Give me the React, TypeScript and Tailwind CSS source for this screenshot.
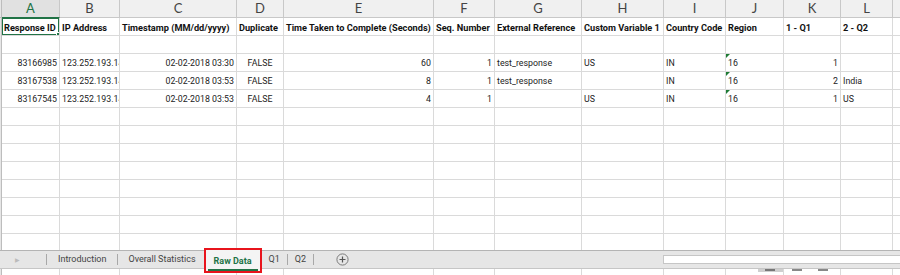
import React from "react";

type Col = { letter: string; w: string; align: string };

const cols: Col[] = [
  { letter: "A", w: "w-[58px]", align: "justify-end text-right" },
  { letter: "B", w: "w-[60px]", align: "justify-start" },
  { letter: "C", w: "w-[117px]", align: "justify-end text-right" },
  { letter: "D", w: "w-[47px]", align: "justify-center" },
  { letter: "E", w: "w-[150px]", align: "justify-end text-right" },
  { letter: "F", w: "w-[61px]", align: "justify-end text-right" },
  { letter: "G", w: "w-[87px]", align: "justify-start" },
  { letter: "H", w: "w-[82px]", align: "justify-start" },
  { letter: "I", w: "w-[62px]", align: "justify-start" },
  { letter: "J", w: "w-[58px]", align: "justify-start" },
  { letter: "K", w: "w-[57px]", align: "justify-end text-right" },
  { letter: "L", w: "w-[52px]", align: "justify-start" },
  { letter: "M", w: "w-[40px]", align: "justify-start" },
];

const headers = [
  "Response ID",
  "IP Address",
  "Timestamp (MM/dd/yyyy)",
  "Duplicate",
  "Time Taken to Complete (Seconds)",
  "Seq. Number",
  "External Reference",
  "Custom Variable 1",
  "Country Code",
  "Region",
  "1 - Q1",
  "2 - Q2",
  "",
];

const data: string[][] = [
  ["83166985", "123.252.193.14", "02-02-2018 03:30", "FALSE", "60", "1", "test_response", "US", "IN", "16", "1", "", ""],
  ["83167538", "123.252.193.14", "02-02-2018 03:53", "FALSE", "8", "1", "test_response", "", "IN", "16", "2", "India", ""],
  ["83167545", "123.252.193.14", "02-02-2018 03:53", "FALSE", "4", "1", "", "US", "IN", "16", "1", "US", ""],
];

const font = { fontFamily: "Roboto, 'Liberation Sans', sans-serif" };
const letterFont = { fontFamily: "Lato, 'Liberation Sans', sans-serif" };

function LeadCell() {
  return <div className="w-[2px] shrink-0 bg-[#e6e6e6] border-r border-[#bdbdbd]" />;
}

function Row({ values, bold, first }: { values: string[]; bold?: boolean; first?: boolean }) {
  return (
    <div className="flex h-[18px] shrink-0">
      <LeadCell />
      {cols.map((c, i) => (
        <div
          key={c.letter}
          className={`${c.w} relative shrink-0 flex items-center overflow-hidden whitespace-nowrap border-r border-b border-[#dadada] px-[2px] pt-[2px] ${
            bold ? "justify-start font-bold text-[9.2px] text-[#111]" : c.align + " text-[#222]"
          }`}
        >
          {values[i]}
          {!bold && c.letter === "J" && values[i] !== "" && (
            <span className="absolute left-0 top-0 w-0 h-0 border-t-[4px] border-r-[4px] border-t-[#1e7b34] border-r-transparent" />
          )}
          {first && i === 0 && (
            <span className="absolute -left-[1px] -top-[1px] right-[-1px] bottom-[-1px] border-2 border-[#217346]">
              <span className="absolute -right-[3px] -bottom-[3px] w-[5px] h-[5px] bg-[#217346] border border-white" />
            </span>
          )}
        </div>
      ))}
    </div>
  );
}

export default function App() {
  const emptyRows = Array.from({ length: 9 });
  return (
    <div className="w-[900px] h-[275px] overflow-hidden bg-white text-[8.8px] leading-none flex flex-col" style={font}>
      {/* column letters */}
      <div className="flex h-[18px] shrink-0 bg-[#f0f0f0] text-[13px] text-[#444]" style={letterFont}>
        <div className="w-[2px] shrink-0 bg-[#e6e6e6] border-r border-b border-[#bdbdbd]" />
        {cols.map((c) => (
          <div
            key={c.letter}
            className={`${c.w} shrink-0 flex items-center justify-center border-r border-b ${
              c.letter === "A"
                ? "bg-[#e1e1e1] text-[#217346] border-b-[#217346] border-r-[#c8c8c8]"
                : "border-[#c8c8c8]"
            }`}
          >
            {c.letter}
          </div>
        ))}
      </div>
      <div className="h-[232px] shrink-0 flex flex-col overflow-hidden">
        <Row values={headers} bold first />
        <Row values={Array(13).fill("")} />
        {data.map((r, i) => (
          <Row key={i} values={r} />
        ))}
        {emptyRows.map((_, i) => (
          <Row key={"e" + i} values={Array(13).fill("")} />
        ))}
      </div>
      {/* sheet tab bar */}
      <div className="relative h-[19px] shrink-0 flex items-stretch bg-[#e6e6e6] border-t border-[#b4b4b4] border-b border-b-[#c6c6c6] text-[9px] text-[#444]">
        <div className="w-[46px] flex items-center pl-[15px] text-[6px] text-[#bbbbbb]">▶</div>
        <div className="w-px my-[3px] bg-[#a8a8a8]" />
        <div className="px-[11px] flex items-center">Introduction</div>
        <div className="w-px my-[3px] bg-[#a8a8a8]" />
        <div className="pl-[10px] pr-[8px] flex items-center">Overall Statistics</div>
        <div className="relative z-10 -mt-[3px] h-[25px] w-[58px] border-2 border-[#e8141c] bg-[#f4f4f4] flex flex-col items-center pt-[7px]">
          <span className="font-bold text-[#217346]">Raw Data</span>
          <span className="mt-[3px] h-[2px] w-[50px] bg-[#217346]" />
        </div>
        <div className="px-[7px] flex items-center">Q1</div>
        <div className="w-px my-[3px] bg-[#a8a8a8]" />
        <div className="px-[7px] flex items-center">Q2</div>
        <div className="w-px my-[3px] bg-[#a8a8a8]" />
        <div className="ml-[22px] flex items-center">
          <svg width="13" height="13" viewBox="0 0 13 13">
            <circle cx="6.5" cy="6.5" r="5.6" fill="none" stroke="#7a7a7a" strokeWidth="1" />
            <path d="M6.5 3.5v6M3.5 6.5h6" stroke="#555" strokeWidth="1.2" />
          </svg>
        </div>
        <div className="flex-1" />
        <div className="w-[237px] my-[4px] bg-white border border-[#c6c6c6] border-r-0" />
      </div>
      {/* bottom strip */}
      <div className="relative flex-1 flex">
        <LeadCell />
        {cols.map((c) => (
          <div key={c.letter} className={`${c.w} shrink-0 border-r border-[#dadada]`} />
        ))}
        <span className="absolute left-[758px] top-0 w-[25px] h-[3px] bg-[#cfcfcf]" />
        <span className="absolute left-[765px] top-0 w-[10px] h-[2px] bg-[#777]" />
        <span className="absolute left-[792px] top-0 w-[10px] h-[2px] bg-[#888]" />
        <span className="absolute left-[818px] top-0 w-[10px] h-[2px] bg-[#888]" />
      </div>
    </div>
  );
}
